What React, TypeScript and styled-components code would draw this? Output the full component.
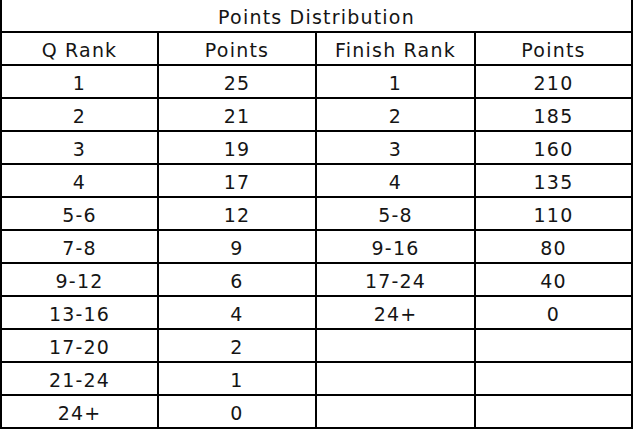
import { FC, Fragment } from "react";
import styled, { createGlobalStyle } from "styled-components";

const GlobalStyle = createGlobalStyle`
body {
  margin: 0;
  background: #fff;
}
`;

const Table = styled.div`
width: 633px;
display: grid;
grid-template-columns: 155px 156px 157px 155px;
grid-auto-rows: 31px;
gap: 2px;
background: #000;
border: 2px solid #000;
border-top: none;
font-family: "DejaVu Sans", sans-serif;
font-weight: 400;
font-size: 19px;
letter-spacing: 1.2px;
color: #151515;
box-sizing: border-box;
`;

const Cell = styled.div<{ $span?: number }>`
grid-column: span ${(p) => p.$span ?? 1};
background: #fff;
display: flex;
align-items: center;
justify-content: center;
padding-top: 2px;
`;

const qualifying = [
  ["1", "25"],
  ["2", "21"],
  ["3", "19"],
  ["4", "17"],
  ["5-6", "12"],
  ["7-8", "9"],
  ["9-12", "6"],
  ["13-16", "4"],
  ["17-20", "2"],
  ["21-24", "1"],
  ["24+", "0"],
];

const finish = [
  ["1", "210"],
  ["2", "185"],
  ["3", "160"],
  ["4", "135"],
  ["5-8", "110"],
  ["9-16", "80"],
  ["17-24", "40"],
  ["24+", "0"],
];

const App: FC = () => {
  return (
    <>
      <GlobalStyle />
      <Table>
        <Cell $span={4}>Points Distribution</Cell>
        <Cell>Q Rank</Cell>
        <Cell>Points</Cell>
        <Cell>Finish Rank</Cell>
        <Cell>Points</Cell>
        {qualifying.map((q, i) => (
          <Fragment key={i}>
            <Cell>{q[0]}</Cell>
            <Cell>{q[1]}</Cell>
            <Cell>{finish[i]?.[0] ?? ""}</Cell>
            <Cell>{finish[i]?.[1] ?? ""}</Cell>
          </Fragment>
        ))}
      </Table>
    </>
  );
};

export default App;
